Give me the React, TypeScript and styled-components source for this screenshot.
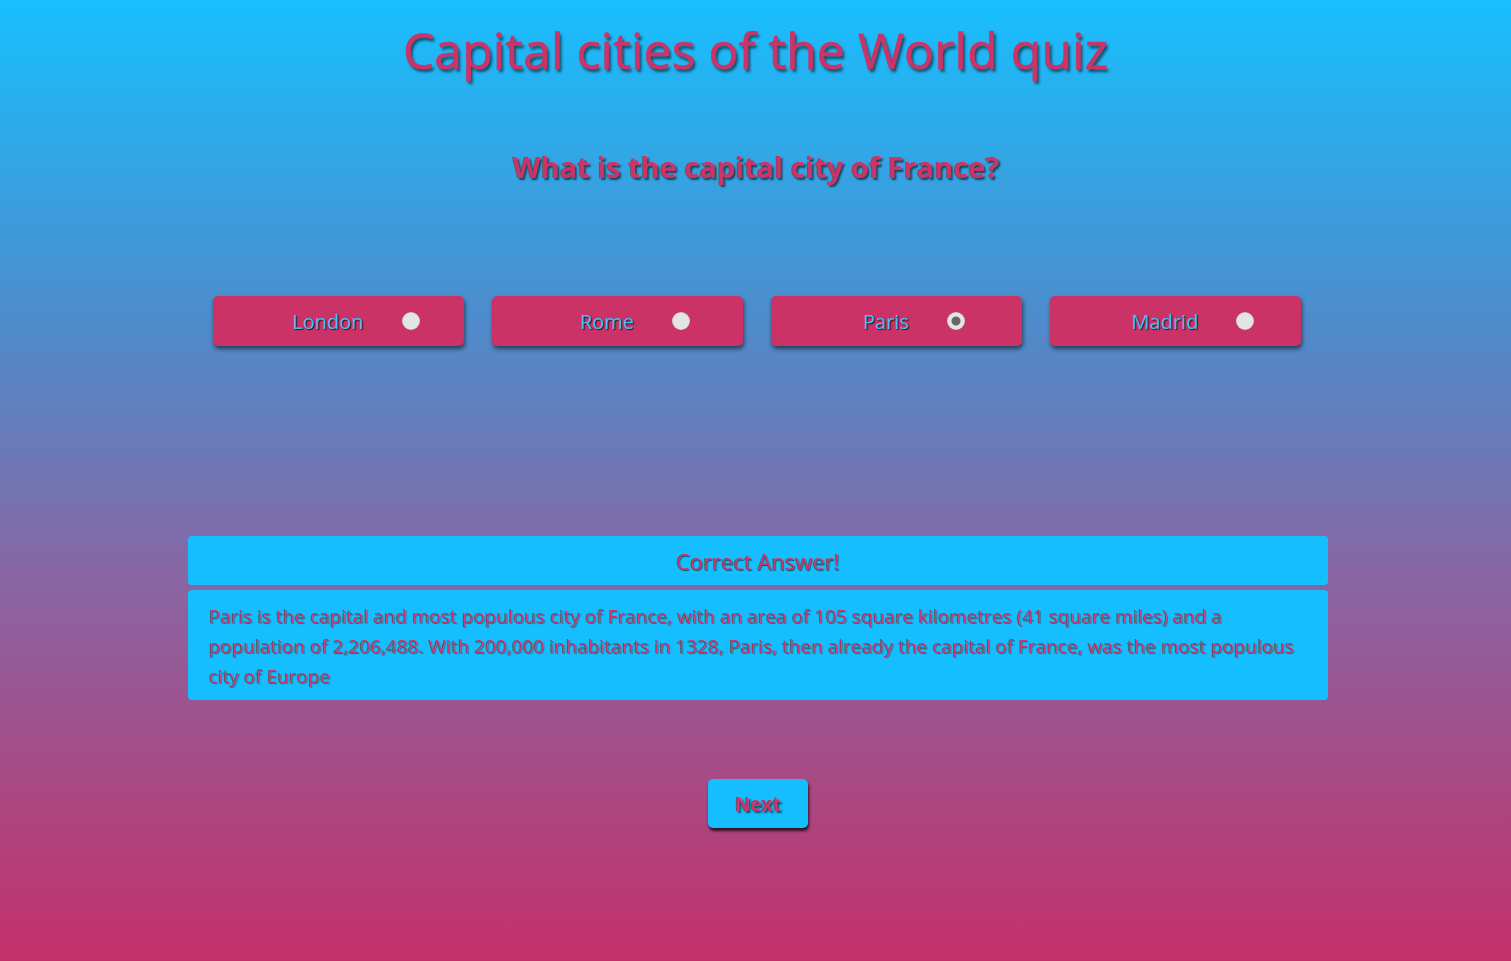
import React, { useState } from 'react'
import styled, { createGlobalStyle } from 'styled-components'

const GlobalStyle = createGlobalStyle`
    html, body {
        margin: 0;
        padding: 0;
        min-height: 100%;
    }
    body {
        font-family: "Open Sans", "Noto Sans", sans-serif;
    }
`

interface Question {
    question: string
    options: string[]
    answer: string
    info: string
}

const QUESTION: Question = {
    question: 'What is the capital city of France?',
    options: ['London', 'Rome', 'Paris', 'Madrid'],
    answer: 'Paris',
    info: 'Paris is the capital and most populous city of France, with an area of 105 square kilometres (41 square miles) and a population of 2,206,488. With 200,000 inhabitants in 1328, Paris, then already the capital of France, was the most populous city of Europe',
}

const App: React.FC = () => {
    const [selected, setSelected] = useState<string>('Paris')
    const correct = selected === QUESTION.answer

    return (
        <StyledPage>
            <GlobalStyle />
            <StyledTitle>Capital cities of the World quiz</StyledTitle>
            <StyledQuestion>{QUESTION.question}</StyledQuestion>
            <StyledOptions>
                {QUESTION.options.map((option) => (
                    <OptionButton
                        key={option}
                        text={option}
                        checked={selected === option}
                        onClick={() => setSelected(option)}
                    />
                ))}
            </StyledOptions>
            <StyledFeedback>
                <StyledFeedbackHeader>{correct ? 'Correct Answer!' : 'Wrong Answer!'}</StyledFeedbackHeader>
                <StyledFeedbackBody>{QUESTION.info}</StyledFeedbackBody>
            </StyledFeedback>
            <StyledNext>Next</StyledNext>
        </StyledPage>
    )
}

interface OptionButtonProps {
    text: string
    checked: boolean
    onClick?: () => void
}

const OptionButton: React.FC<OptionButtonProps> = ({ text, checked, onClick }) => {
    return (
        <StyledOption onClick={onClick}>
            <StyledOptionText>{text}</StyledOptionText>
            <StyledRadio $checked={checked} />
        </StyledOption>
    )
}

const StyledPage = styled.div`
    min-height: 961px;
    box-sizing: border-box;
    background: linear-gradient(180deg, #18bffe 0%, #4d8ccc 33%, #8866a3 60%, #c4306a 100%);

    display: flex;
    flex-direction: column;
    align-items: center;
`

const StyledTitle = styled.h1`
    margin: 18px 0 0 0;
    font-size: 50px;
    font-weight: 400;
    line-height: 64px;
    color: #cc3366;
    text-shadow: 2px 3px 3px rgba(0, 0, 0, 0.6);
    -webkit-text-stroke: 0.7px #cc3366;
`

const StyledQuestion = styled.h2`
    margin: 65px 0 0 0;
    font-size: 29px;
    font-weight: 700;
    line-height: 40px;
    color: #cc3366;
    text-shadow: 2px 2px 2px rgba(0, 0, 0, 0.6);
`

const StyledOptions = styled.div`
    margin-top: 109px;
    margin-left: 2px;
    display: flex;
    flex-direction: row;
    gap: 28px;
`

const StyledOption = styled.div`
    box-sizing: border-box;
    width: 251px;
    height: 50px;
    padding-left: 36px;
    border-radius: 5px;
    background: #cb3366;
    box-shadow: 1px 3px 4px rgba(0, 0, 0, 0.55);

    display: flex;
    justify-content: center;
    align-items: center;
    gap: 38px;

    cursor: pointer;
`

const StyledOptionText = styled.span`
    font-size: 20px;
    color: #3ac0f7;
    text-shadow: 1px 1px 1px rgba(0, 0, 0, 0.7);
`

const StyledRadio = styled.span<{ $checked: boolean }>`
    box-sizing: border-box;
    width: 18px;
    height: 18px;
    border-radius: 50%;
    background: ${(props) => (props.$checked
        ? 'radial-gradient(circle, #666666 0 4px, #e4e4e4 5px)'
        : '#e4e4e4')};
    box-shadow: inset 0 0 1px rgba(0, 0, 0, 0.4);
`

const StyledFeedback = styled.div`
    margin-top: 190px;
    margin-left: 4px;
    width: 1140px;
    display: flex;
    flex-direction: column;
    gap: 5px;
`

const StyledFeedbackHeader = styled.div`
    height: 49px;
    border-radius: 4px;
    background: #15bfff;

    display: flex;
    justify-content: center;
    align-items: center;

    font-size: 22px;
    color: #cc3366;
    text-shadow: 1px 1px 1px rgba(0, 0, 0, 0.6);
`

const StyledFeedbackBody = styled.div`
    box-sizing: border-box;
    border-radius: 4px;
    background: #15bfff;
    padding: 11px 21px 9px 21px;

    font-size: 19px;
    line-height: 30px;
    color: #cc3366;
    text-shadow: 1px 1px 1px rgba(0, 0, 0, 0.45);
`

const StyledNext = styled.button`
    margin-top: 79px;
    margin-left: 4px;
    width: 100px;
    height: 49px;
    border: none;
    border-radius: 5px;
    background: #15bfff;
    box-shadow: 1px 3px 3px rgba(0, 0, 0, 0.75);

    font-family: "Open Sans", "Noto Sans", sans-serif;
    font-size: 19px;
    font-weight: 700;
    color: #cc3366;
    text-shadow: 2px 2px 2px rgba(0, 0, 0, 0.6);
    cursor: pointer;
`

export default App
